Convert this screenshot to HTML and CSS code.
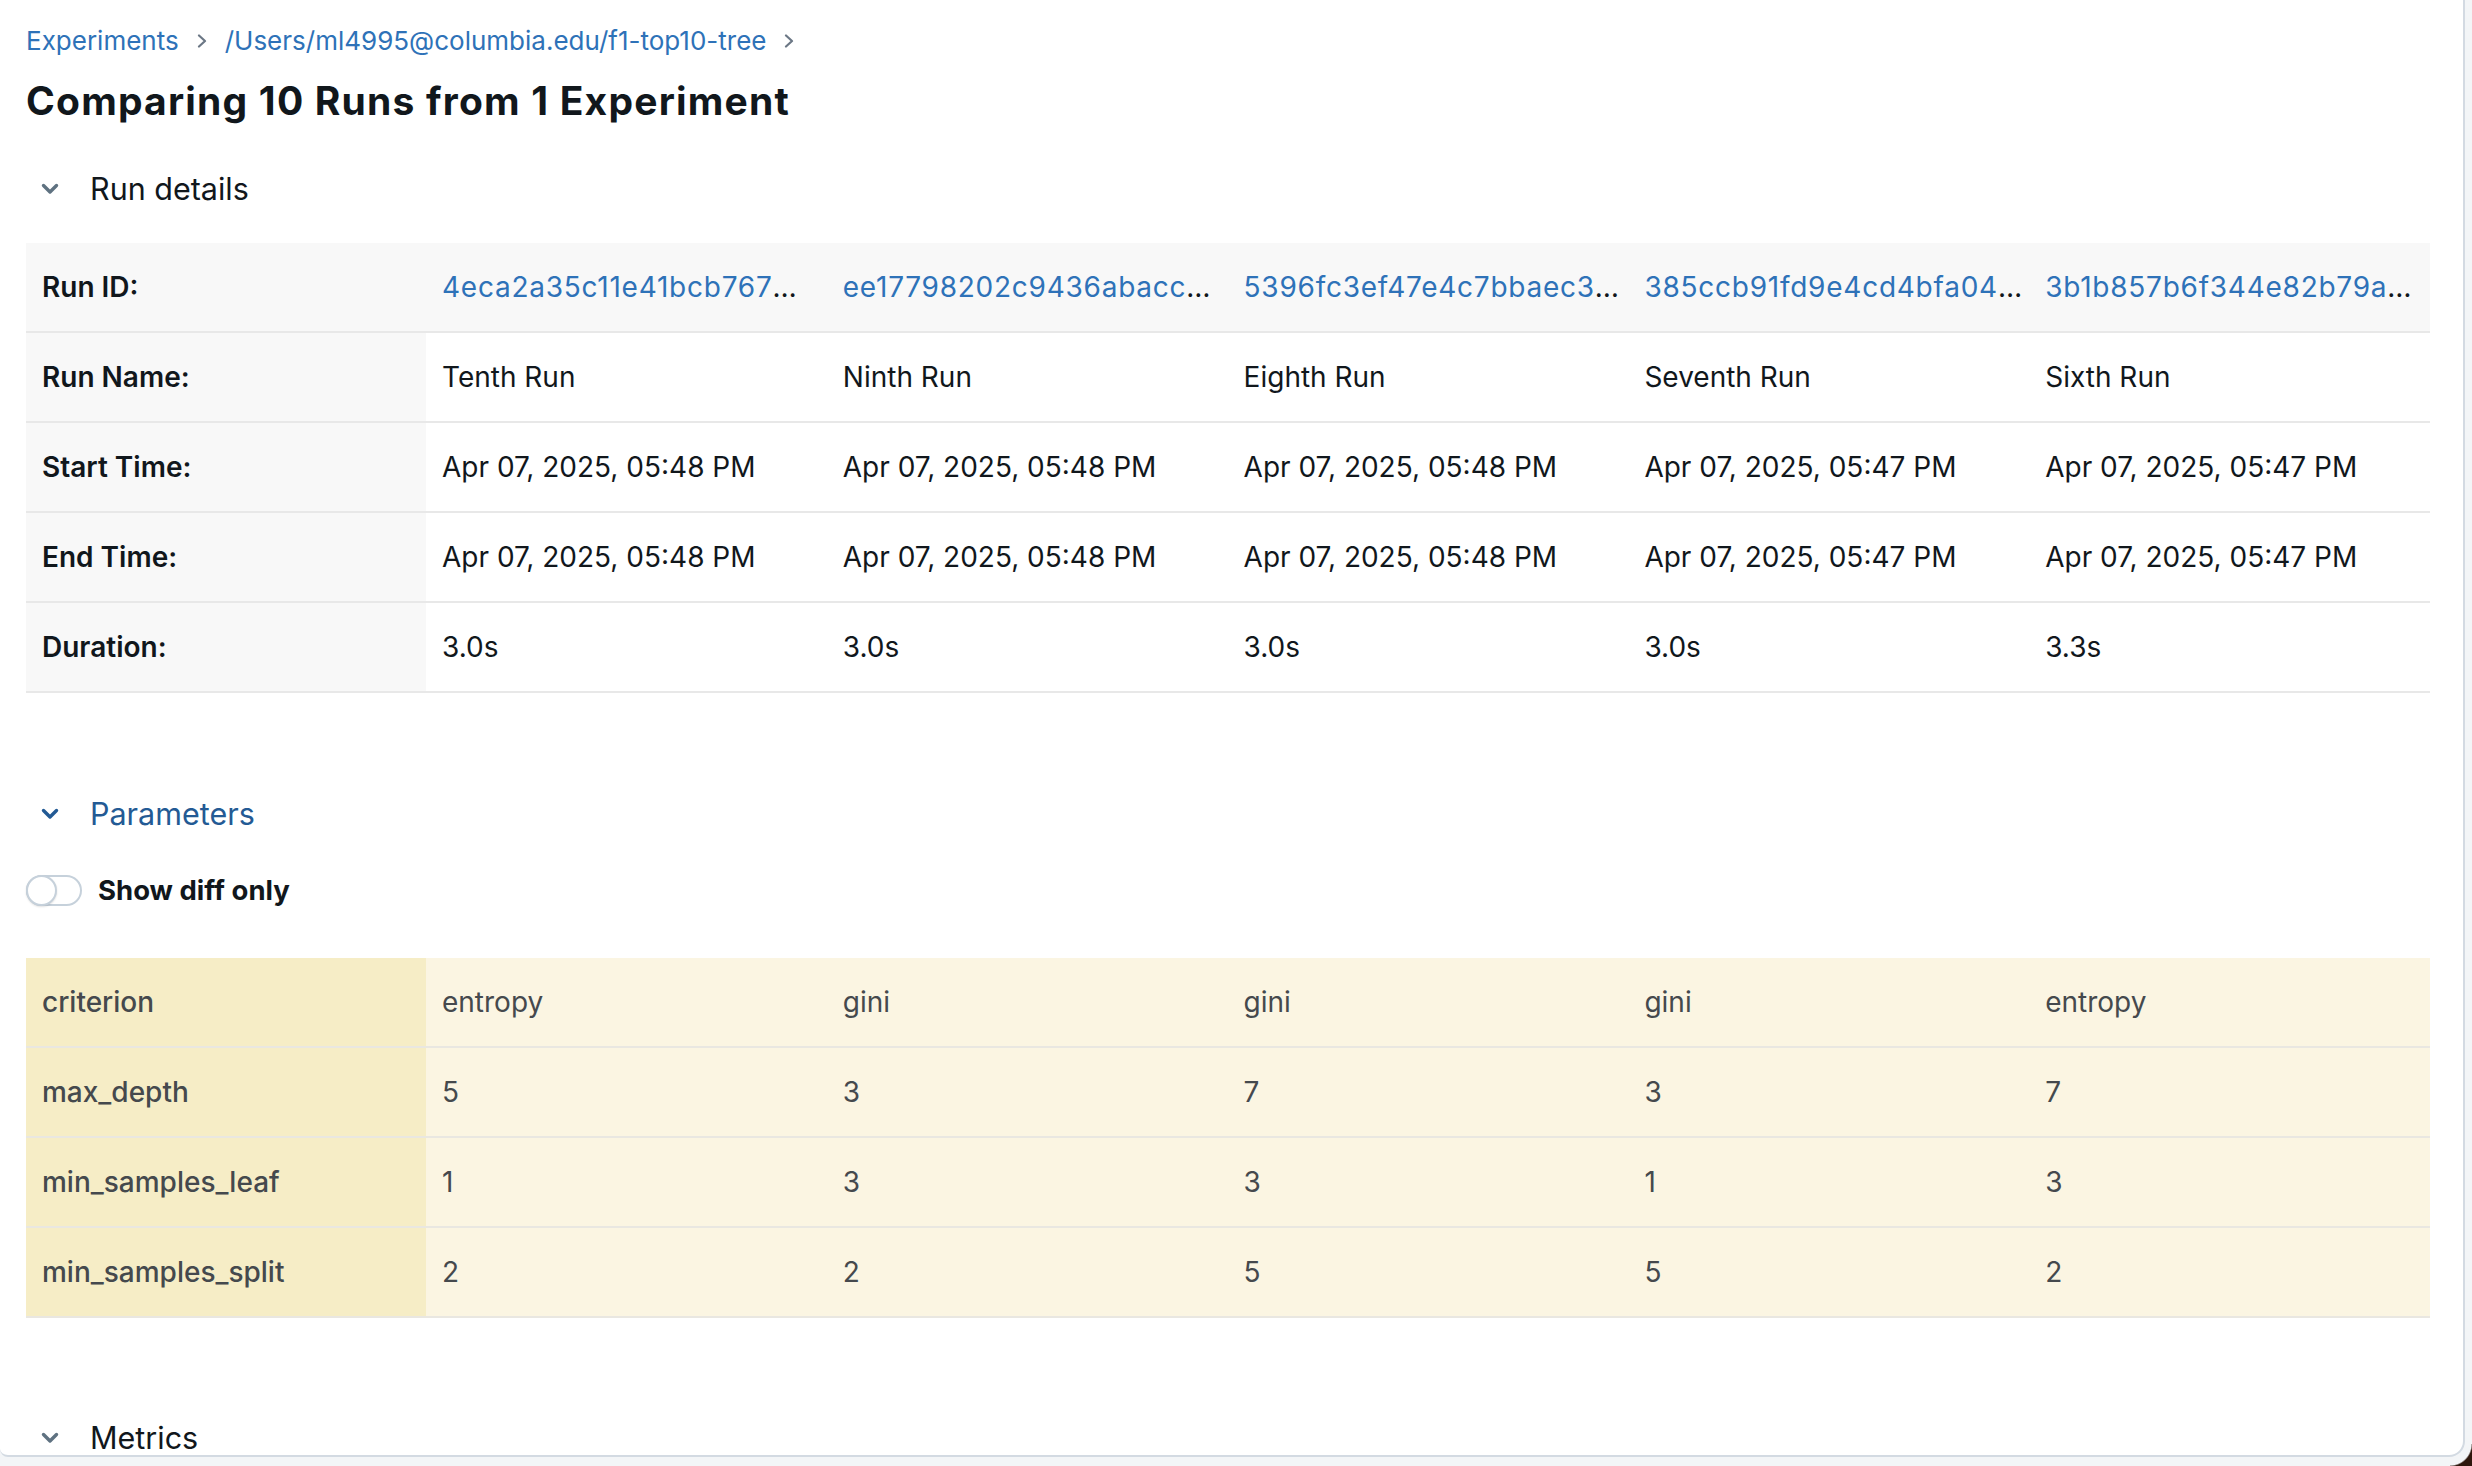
FILE: index.html
```html
<!DOCTYPE html>
<html lang="en">
<head>
<meta charset="utf-8">
<title>Comparing 10 Runs from 1 Experiment</title>
<link rel="stylesheet" href="styles.css">
</head>
<body>
<div class="window">
  <main class="card">
    <nav class="crumbs">
      <a class="crumb" href="#">Experiments</a>
      <svg class="crumb-sep" viewBox="0 0 10 14" width="10" height="14"><polyline points="2,1.5 8,7 2,12.5" fill="none" stroke="currentColor" stroke-width="2.2" stroke-linecap="round" stroke-linejoin="round"/></svg>
      <a class="crumb" href="#">/Users/ml4995@columbia.edu/f1-top10-tree</a>
      <svg class="crumb-sep" viewBox="0 0 10 14" width="10" height="14"><polyline points="2,1.5 8,7 2,12.5" fill="none" stroke="currentColor" stroke-width="2.2" stroke-linecap="round" stroke-linejoin="round"/></svg>
    </nav>
    <h1 class="title">Comparing 10 Runs from 1 Experiment</h1>

    <div class="section-head">
      <svg class="chev" viewBox="0 0 18 12" width="18" height="12"><polyline points="2.5,2.5 9,9 15.5,2.5" fill="none" stroke="currentColor" stroke-width="3.4" stroke-linecap="round" stroke-linejoin="round"/></svg>
      <span>Run details</span>
    </div>

    <div class="table details">
      <div class="row idrow">
        <div class="cell label">Run ID:</div>
        <div class="cell"><a href="#">4eca2a35c11e41bcb767</a>…</div>
        <div class="cell"><a href="#">ee17798202c9436abacc</a>…</div>
        <div class="cell"><a href="#">5396fc3ef47e4c7bbaec3</a>…</div>
        <div class="cell"><a href="#">385ccb91fd9e4cd4bfa04</a>…</div>
        <div class="cell"><a href="#">3b1b857b6f344e82b79a</a>…</div>
      </div>
      <div class="row">
        <div class="cell label">Run Name:</div>
        <div class="cell">Tenth Run</div>
        <div class="cell">Ninth Run</div>
        <div class="cell">Eighth Run</div>
        <div class="cell">Seventh Run</div>
        <div class="cell">Sixth Run</div>
      </div>
      <div class="row">
        <div class="cell label">Start Time:</div>
        <div class="cell">Apr 07, 2025, 05:48 PM</div>
        <div class="cell">Apr 07, 2025, 05:48 PM</div>
        <div class="cell">Apr 07, 2025, 05:48 PM</div>
        <div class="cell">Apr 07, 2025, 05:47 PM</div>
        <div class="cell">Apr 07, 2025, 05:47 PM</div>
      </div>
      <div class="row">
        <div class="cell label">End Time:</div>
        <div class="cell">Apr 07, 2025, 05:48 PM</div>
        <div class="cell">Apr 07, 2025, 05:48 PM</div>
        <div class="cell">Apr 07, 2025, 05:48 PM</div>
        <div class="cell">Apr 07, 2025, 05:47 PM</div>
        <div class="cell">Apr 07, 2025, 05:47 PM</div>
      </div>
      <div class="row">
        <div class="cell label">Duration:</div>
        <div class="cell">3.0s</div>
        <div class="cell">3.0s</div>
        <div class="cell">3.0s</div>
        <div class="cell">3.0s</div>
        <div class="cell">3.3s</div>
      </div>
    </div>

    <div class="section-head params-head">
      <svg class="chev" viewBox="0 0 18 12" width="18" height="12"><polyline points="2.5,2.5 9,9 15.5,2.5" fill="none" stroke="currentColor" stroke-width="3.4" stroke-linecap="round" stroke-linejoin="round"/></svg>
      <span>Parameters</span>
    </div>

    <label class="switch-row">
      <span class="switch"><span class="knob"></span></span>
      <span class="switch-label">Show diff only</span>
    </label>

    <div class="table params">
      <div class="row">
        <div class="cell label">criterion</div>
        <div class="cell">entropy</div>
        <div class="cell">gini</div>
        <div class="cell">gini</div>
        <div class="cell">gini</div>
        <div class="cell">entropy</div>
      </div>
      <div class="row">
        <div class="cell label">max_depth</div>
        <div class="cell">5</div>
        <div class="cell">3</div>
        <div class="cell">7</div>
        <div class="cell">3</div>
        <div class="cell">7</div>
      </div>
      <div class="row">
        <div class="cell label">min_samples_leaf</div>
        <div class="cell">1</div>
        <div class="cell">3</div>
        <div class="cell">3</div>
        <div class="cell">1</div>
        <div class="cell">3</div>
      </div>
      <div class="row">
        <div class="cell label">min_samples_split</div>
        <div class="cell">2</div>
        <div class="cell">2</div>
        <div class="cell">5</div>
        <div class="cell">5</div>
        <div class="cell">2</div>
      </div>
    </div>

    <div class="section-head metrics-head">
      <svg class="chev" viewBox="0 0 18 12" width="18" height="12"><polyline points="2.5,2.5 9,9 15.5,2.5" fill="none" stroke="currentColor" stroke-width="3.4" stroke-linecap="round" stroke-linejoin="round"/></svg>
      <span>Metrics</span>
    </div>
  </main>
  <div class="win-corner"></div>
</div>
</body>
</html>
```

FILE: styles.css
```css
* { box-sizing: border-box; }

html, body {
  margin: 0;
  padding: 0;
}

body {
  width: 2472px;
  height: 1466px;
  overflow: hidden;
  background: #f3f5f7;
  font-family: Inter, "Noto Sans", "Liberation Sans", sans-serif;
  color: #11171c;
}

.window {
  position: relative;
  width: 2472px;
  height: 1466px;
}

.card {
  width: 2465px;
  height: 1457px;
  background: #ffffff;
  border-right: 2px solid #d3dae2;
  border-bottom: 2px solid #d3dae2;
  border-bottom-right-radius: 16px;
  border-bottom-left-radius: 8px;
  overflow: hidden;
  padding: 0 33px 0 26px;
}

.crumbs {
  margin-top: 25px;
  height: 32px;
  display: flex;
  align-items: center;
  gap: 18px;
  font-size: 26px;
  line-height: 32px;
}

.crumb {
  color: #2e72b8;
  text-decoration: none;
}

.crumb-sep {
  color: #6b7785;
  width: 10px;
  height: 14px;
}

.title {
  margin: 20px 0 0;
  height: 48px;
  font-size: 39px;
  line-height: 48px;
  font-weight: 700;
  letter-spacing: 1.2px;
  color: #11171c;
}

.section-head {
  display: flex;
  align-items: center;
  height: 44px;
  margin-top: 42px;
  padding-left: 15px;
  gap: 31px;
  font-size: 30.5px;
  line-height: 44px;
  color: #11171c;
}

.chev {
  color: #5f7281;
  width: 18px;
  height: 12px;
  flex: none;
}

.params-head {
  margin-top: 99px;
  color: #235a94;
}

.params-head .chev {
  color: #235a94;
}

.metrics-head {
  margin-top: 98px;
}

.table {
  margin-top: 32px;
  display: flex;
  flex-direction: column;
}

.row {
  display: grid;
  grid-template-columns: 400px repeat(5, 1fr);
  height: 90px;
  border-bottom: 2px solid #e8e8e8;
}

.cell {
  display: flex;
  align-items: center;
  padding: 0 16px;
  font-size: 28px;
  line-height: 36px;
  white-space: nowrap;
  overflow: hidden;
}

.details .cell {
  color: #11171c;
}

.details .label {
  background: #f8f8f8;
  font-weight: 600;
}

.details .idrow .cell {
  background: #f8f8f8;
}

.details a {
  color: #2e72b8;
  text-decoration: none;
  letter-spacing: 0.75px;
}

.switch-row {
  display: flex;
  align-items: center;
  gap: 16px;
  height: 34px;
  margin-top: 37px;
}

.switch {
  position: relative;
  width: 56px;
  height: 31px;
  border: 2px solid #c6d1db;
  border-radius: 16px;
  background: #ffffff;
  flex: none;
}

.knob {
  position: absolute;
  left: -2px;
  top: -2px;
  width: 31px;
  height: 31px;
  border-radius: 50%;
  border: 2px solid #c6d1db;
  background: #ffffff;
  box-shadow: 0 1px 2px rgba(0, 0, 0, 0.12);
}

.switch-label {
  font-size: 27.5px;
  font-weight: 700;
  line-height: 34px;
  color: #11171c;
}

.params {
  margin-top: 51px;
}

.params .row {
  border-bottom-color: #e9e7e1;
}

.params .cell {
  background: #fbf5e2;
  color: #45494d;
}

.params .label {
  background: #f6edc6;
  font-weight: 500;
}

.win-corner {
  position: absolute;
  right: 0;
  bottom: 0;
  width: 22px;
  height: 22px;
  background: radial-gradient(circle at 0 0, transparent 21px, #2e170d 22.5px);
}
```
